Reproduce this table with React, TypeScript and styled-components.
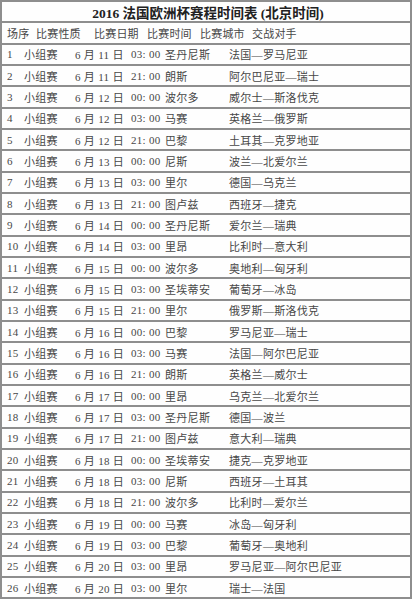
import React from "react";
import styled, { createGlobalStyle } from "styled-components";

interface Match {
  no: number;
  date: string;
  time: string;
  city: string;
  teams: string;
}

const matches: Match[] = [
  { no: 1, date: "6 月 11 日", time: "03: 00", city: "圣丹尼斯", teams: "法国—罗马尼亚" },
  { no: 2, date: "6 月 11 日", time: "21: 00", city: "朗斯", teams: "阿尔巴尼亚—瑞士" },
  { no: 3, date: "6 月 12 日", time: "00: 00", city: "波尔多", teams: "威尔士—斯洛伐克" },
  { no: 4, date: "6 月 12 日", time: "03: 00", city: "马赛", teams: "英格兰—俄罗斯" },
  { no: 5, date: "6 月 12 日", time: "21: 00", city: "巴黎", teams: "土耳其—克罗地亚" },
  { no: 6, date: "6 月 13 日", time: "00: 00", city: "尼斯", teams: "波兰—北爱尔兰" },
  { no: 7, date: "6 月 13 日", time: "03: 00", city: "里尔", teams: "德国—乌克兰" },
  { no: 8, date: "6 月 13 日", time: "21: 00", city: "图卢兹", teams: "西班牙—捷克" },
  { no: 9, date: "6 月 14 日", time: "00: 00", city: "圣丹尼斯", teams: "爱尔兰—瑞典" },
  { no: 10, date: "6 月 14 日", time: "03: 00", city: "里昂", teams: "比利时—意大利" },
  { no: 11, date: "6 月 15 日", time: "00: 00", city: "波尔多", teams: "奥地利—匈牙利" },
  { no: 12, date: "6 月 15 日", time: "03: 00", city: "圣埃蒂安", teams: "葡萄牙—冰岛" },
  { no: 13, date: "6 月 15 日", time: "21: 00", city: "里尔", teams: "俄罗斯—斯洛伐克" },
  { no: 14, date: "6 月 16 日", time: "00: 00", city: "巴黎", teams: "罗马尼亚—瑞士" },
  { no: 15, date: "6 月 16 日", time: "03: 00", city: "马赛", teams: "法国—阿尔巴尼亚" },
  { no: 16, date: "6 月 16 日", time: "21: 00", city: "朗斯", teams: "英格兰—威尔士" },
  { no: 17, date: "6 月 17 日", time: "00: 00", city: "里昂", teams: "乌克兰—北爱尔兰" },
  { no: 18, date: "6 月 17 日", time: "03: 00", city: "圣丹尼斯", teams: "德国—波兰" },
  { no: 19, date: "6 月 17 日", time: "21: 00", city: "图卢兹", teams: "意大利—瑞典" },
  { no: 20, date: "6 月 18 日", time: "00: 00", city: "圣埃蒂安", teams: "捷克—克罗地亚" },
  { no: 21, date: "6 月 18 日", time: "03: 00", city: "尼斯", teams: "西班牙—土耳其" },
  { no: 22, date: "6 月 18 日", time: "21: 00", city: "波尔多", teams: "比利时—爱尔兰" },
  { no: 23, date: "6 月 19 日", time: "00: 00", city: "马赛", teams: "冰岛—匈牙利" },
  { no: 24, date: "6 月 19 日", time: "03: 00", city: "巴黎", teams: "葡萄牙—奥地利" },
  { no: 25, date: "6 月 20 日", time: "03: 00", city: "里昂", teams: "罗马尼亚—阿尔巴尼亚" },
  { no: 26, date: "6 月 20 日", time: "03: 00", city: "里尔", teams: "瑞士—法国" },
];

const headers = ["场序", "比赛性质", "比赛日期", "比赛时间", "比赛城市", "交战对手"];

export default function App() {
  return (
    <>
      <GlobalStyle />
      <Sheet>
        <TitleRow>2016 法国欧洲杯赛程时间表 (北京时间)</TitleRow>
        <HeaderRow>
          {headers.map((h) => (
            <span key={h}>{h}</span>
          ))}
        </HeaderRow>
        {matches.map((m) => (
          <MatchRow key={m.no}>
            <span>{m.no}</span>
            <span>小组赛</span>
            <span>{m.date}</span>
            <span>{m.time}</span>
            <span>{m.city}</span>
            <span>{m.teams}</span>
          </MatchRow>
        ))}
      </Sheet>
    </>
  );
}

const GlobalStyle = createGlobalStyle`
  html, body {
    margin: 0;
    padding: 0;
    background: #ffffff;
  }
  body {
    font-family: "Liberation Serif", "Noto Sans CJK SC", serif;
  }
`;

const Sheet = styled.div`
  width: 412px;
  height: 599px;
  box-sizing: border-box;
  border: 2px solid #8e8e8e;
  display: flex;
  flex-direction: column;
  background: #fefefe;
`;

const Row = styled.div`
  flex: 1;
  min-height: 0;
  box-sizing: border-box;
  display: grid;
  align-items: center;
  white-space: nowrap;
  & + & {
    border-top: 2px solid #8e8e8e;
  }
`;

const TitleRow = styled(Row)`
  justify-content: center;
  font-size: 13.5px;
  font-weight: 700;
  color: #222222;
  padding-left: 4px;
`;

const HeaderRow = styled(Row)`
  grid-template-columns: 29px 58px 53px 53px 52px auto;
  padding-left: 5px;
  font-size: 11px;
  letter-spacing: 0.2px;
  color: #474747;
`;

const MatchRow = styled(Row)`
  grid-template-columns: 17px 51px 56px 34px 64px auto;
  padding-left: 5px;
  font-size: 11px;
  letter-spacing: 0.3px;
  color: #474747;
`;
